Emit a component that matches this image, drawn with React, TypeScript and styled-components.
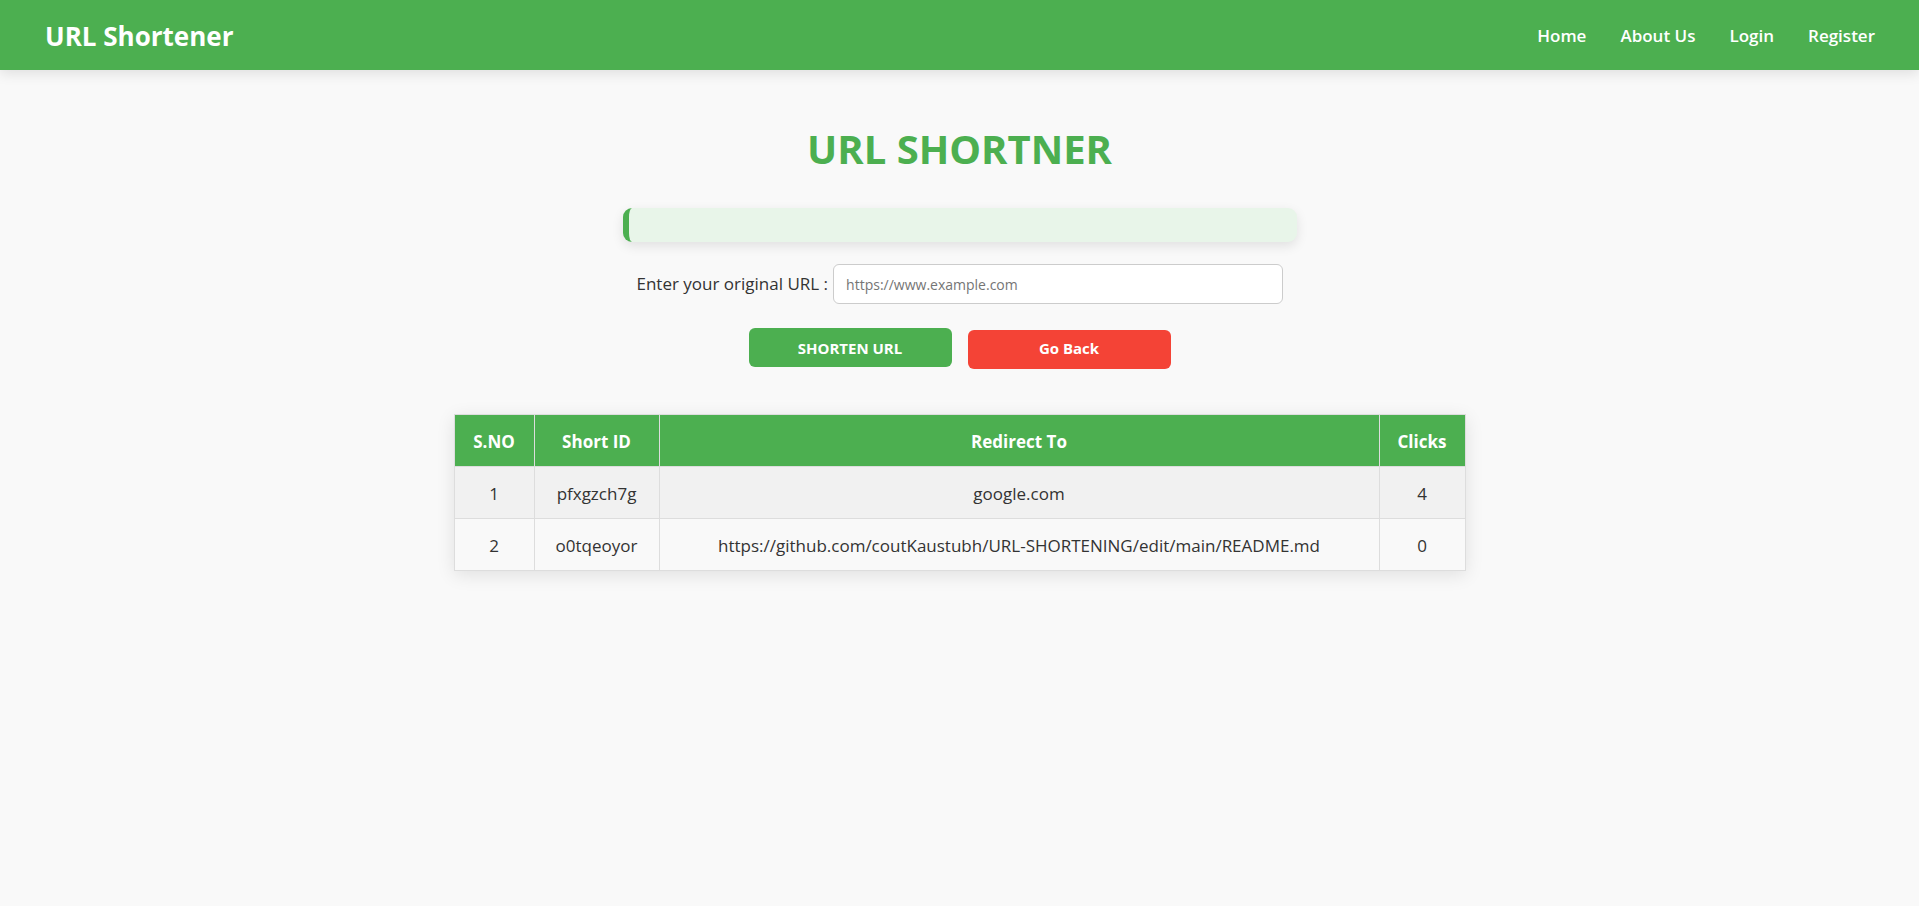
import React, { useState } from "react";
import styled, { createGlobalStyle } from "styled-components";

const GlobalStyle = createGlobalStyle`
  *, *::before, *::after { box-sizing: border-box; }
  body {
    margin: 0;
    background: #f9f9f9;
    color: #333;
    font-family: "Segoe UI", "Open Sans", "Noto Sans", sans-serif;
    font-size: 17px;
    line-height: 24px;
  }
`;

const Header = styled.header`
  display: flex;
  align-items: center;
  justify-content: space-between;
  min-height: 70px;
  padding: 2px 44px 0 45px;
  background: #4caf50;
  box-shadow: 0 4px 12px rgba(0, 0, 0, 0.1);
`;

const Brand = styled.a`
  color: #fff;
  font-size: 26px;
  font-weight: 700;
  line-height: 36px;
  text-decoration: none;
`;

const Nav = styled.nav`
  display: flex;
  gap: 34px;
`;

const NavLink = styled.a`
  color: #fff;
  font-weight: 600;
  text-decoration: none;
`;

const Main = styled.main`
  display: flex;
  flex-direction: column;
  align-items: center;
  padding: 52px 24px;
`;

const Title = styled.h1`
  margin: 0 0 32px;
  color: #4caf50;
  font-size: 40px;
  font-weight: 700;
  line-height: 54px;
`;

const Notice = styled.div`
  width: 100%;
  max-width: 674px;
  padding: 17px;
  border-left: 6px solid #4caf50;
  border-radius: 9px;
  background: #e8f5e9;
  box-shadow: 0 4px 12px rgba(0, 0, 0, 0.1);
`;

const Form = styled.form`
  width: 100%;
  max-width: 646px;
  margin: 22px 0 45px;
`;

const Field = styled.div`
  display: flex;
  align-items: center;
  gap: 5px;
`;

const Label = styled.label`
  flex: 1;
  white-space: nowrap;
`;

const Input = styled.input`
  flex: 0 1 450px;
  min-width: 0;
  height: 40px;
  padding: 0 12px;
  border: 1px solid #ccc;
  border-radius: 6px;
  background: #fff;
  color: #333;
  font-family: inherit;
  font-size: 14px;

  &::placeholder { color: #757575; }
`;

const Actions = styled.div`
  display: flex;
  justify-content: center;
  gap: 16px;
  margin-top: 24px;
`;

const Button = styled.button<{ $danger?: boolean }>`
  width: 203px;
  height: 39px;
  margin-top: ${(p) => (p.$danger ? "2px" : "0")};
  padding: ${(p) => (p.$danger ? "0 0 4px" : "0")};
  border: 0;
  border-radius: 6px;
  background: ${(p) => (p.$danger ? "#f44336" : "#4caf50")};
  color: #fff;
  font-family: inherit;
  font-size: 15px;
  font-weight: 700;
  cursor: pointer;
`;

const Table = styled.table`
  width: 100%;
  max-width: 1012px;
  border-collapse: collapse;
  table-layout: fixed;
  text-align: center;
  box-shadow: 0 4px 17px rgba(0, 0, 0, 0.1);
`;

const Col = styled.col<{ $width?: number }>`
  width: ${(p) => (p.$width ? `${p.$width}px` : "auto")};
`;

const HeadCell = styled.th`
  height: 52px;
  padding: 2px 0 0;
  border: 1px solid #ddd;
  background: #4caf50;
  color: #fff;
  font-weight: 700;
`;

const Row = styled.tr`
  &:nth-child(odd) { background: #f1f1f1; }
`;

const Cell = styled.td`
  height: 52px;
  padding: 2px 0 0;
  border: 1px solid #ddd;
  overflow-wrap: anywhere;
`;

const navItems = ["Home", "About Us", "Login", "Register"];

const links = [
  { id: "pfxgzch7g", target: "google.com", clicks: 4 },
  {
    id: "o0tqeoyor",
    target: "https://github.com/coutKaustubh/URL-SHORTENING/edit/main/README.md",
    clicks: 0,
  },
];

export default function App() {
  const [url, setUrl] = useState("");

  return (
    <>
      <GlobalStyle />
      <Header>
        <Brand href="#">URL Shortener</Brand>
        <Nav>
          {navItems.map((item) => (
            <NavLink key={item} href="#">{item}</NavLink>
          ))}
        </Nav>
      </Header>
      <Main>
        <Title>URL SHORTNER</Title>
        <Notice role="status" />
        <Form onSubmit={(e) => e.preventDefault()}>
          <Field>
            <Label htmlFor="url">Enter your original URL :</Label>
            <Input
              id="url"
              type="text"
              placeholder="https://www.example.com"
              value={url}
              onChange={(e) => setUrl(e.target.value)}
            />
          </Field>
          <Actions>
            <Button type="submit">SHORTEN URL</Button>
            <Button type="button" $danger>Go Back</Button>
          </Actions>
        </Form>
        <Table>
          <colgroup>
            <Col $width={80} />
            <Col $width={125} />
            <Col />
            <Col $width={86} />
          </colgroup>
          <thead>
            <tr>
              <HeadCell>S.NO</HeadCell>
              <HeadCell>Short ID</HeadCell>
              <HeadCell>Redirect To</HeadCell>
              <HeadCell>Clicks</HeadCell>
            </tr>
          </thead>
          <tbody>
            {links.map((link, i) => (
              <Row key={link.id}>
                <Cell>{i + 1}</Cell>
                <Cell>{link.id}</Cell>
                <Cell>{link.target}</Cell>
                <Cell>{link.clicks}</Cell>
              </Row>
            ))}
          </tbody>
        </Table>
      </Main>
    </>
  );
}
